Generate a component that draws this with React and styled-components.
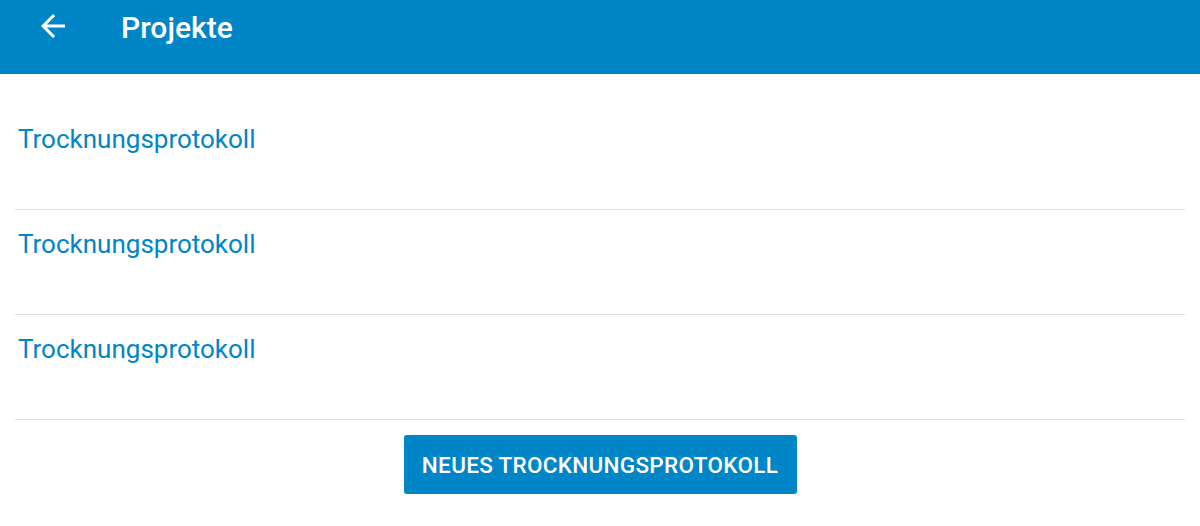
import React from "react";
import styled, { createGlobalStyle } from "styled-components";

const GlobalStyle = createGlobalStyle`
  body {
    margin: 0;
    background: #fff;
    font-family: Roboto, "Liberation Sans", sans-serif;
  }
`;

const Page = styled.div`
  width: 1200px;
  height: 526px;
  overflow: hidden;
  background: #fff;
`;

const Toolbar = styled.header`
  height: 74px;
  background: #0085c7;
  display: flex;
  align-items: flex-start;
  color: #fff;
`;

const BackButton = styled.button`
  border: 0;
  background: none;
  padding: 0;
  margin: 8px 0 0 35px;
  width: 36px;
  height: 36px;
  color: #fff;
  display: flex;
  svg {
    width: 36px;
    height: 36px;
  }
`;

const Title = styled.h1`
  margin: 10px 0 0 50px;
  font-size: 30px;
  font-weight: 500;
  line-height: 36px;
`;

const List = styled.ul`
  list-style: none;
  margin: 0;
  padding: 31px 15px 0;
`;

const Row = styled.li`
  box-sizing: border-box;
  height: 105px;
  border-bottom: 1px solid #dedede;
  padding: 19px 0 0 3px;
  font-size: 26px;
  line-height: 30px;
  color: #0085c7;
`;

const Actions = styled.div`
  display: flex;
  justify-content: center;
  padding-top: 15px;
`;

const PrimaryButton = styled.button`
  width: 393px;
  height: 59px;
  border: 0;
  border-radius: 3px;
  background: #0085c7;
  color: #fff;
  font-family: Roboto, "Liberation Sans", sans-serif;
  font-size: 22.5px;
  font-weight: 500;
  text-transform: uppercase;
  letter-spacing: 0.3px;
  padding: 0;
`;

const ArrowBack = () => (
  <svg viewBox="0 0 24 24" fill="currentColor">
    <path d="M20 11H7.83l5.59-5.59L12 4l-8 8 8 8 1.41-1.41L7.83 13H20v-2z" />
  </svg>
);

const protocols = ["Trocknungsprotokoll", "Trocknungsprotokoll", "Trocknungsprotokoll"];

export default function App() {
  return (
    <Page>
      <GlobalStyle />
      <Toolbar>
        <BackButton aria-label="Zurück">
          <ArrowBack />
        </BackButton>
        <Title>Projekte</Title>
      </Toolbar>
      <List>
        {protocols.map((name, i) => (
          <Row key={i}>{name}</Row>
        ))}
      </List>
      <Actions>
        <PrimaryButton>Neues Trocknungsprotokoll</PrimaryButton>
      </Actions>
    </Page>
  );
}
